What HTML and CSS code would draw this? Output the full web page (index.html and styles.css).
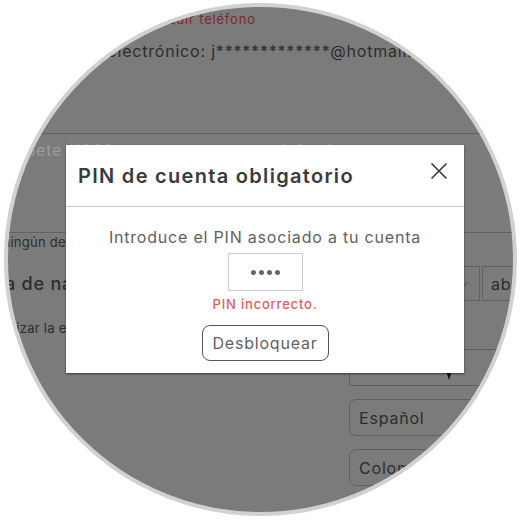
FILE: index.html
```html
<!DOCTYPE html>
<html lang="es">
<head>
<meta charset="utf-8">
<title>PIN de cuenta obligatorio</title>
<link rel="stylesheet" href="styles.css">
</head>
<body>
<div class="lens">
  <div class="page">
    <div class="add-phone">Añadir teléfono</div>
    <div class="email">Correo electrónico: j*************@hotmail.com</div>
    <div class="textarea"><span class="placeholder">Descríbete (1000 caracteres como máximo)</span></div>
    <div class="hint hint-desc">No incluyas ningún detalle personal</div>
    <div class="birth-row">
      <div class="birth-label">Fecha de nacimiento</div>
      <div class="select select-day">
        <span>12</span>
        <svg class="chev" width="10" height="6" viewBox="0 0 10 6"><path d="M1 1l4 4 4-4" fill="none" stroke="#5a5a5a" stroke-width="1.2"/></svg>
      </div>
      <div class="select select-month"><span>abr</span></div>
    </div>
    <div class="hint hint-age">Actualizar la edad requiere verificación</div>
    <div class="field field-gender">
      <svg class="caret" width="8" height="12" viewBox="0 0 8 12"><path d="M0 0h8L4 12z" fill="#141414"/></svg>
    </div>
    <div class="field field-round">Español</div>
    <div class="field field-round">Colombia</div>
  </div>

  <div class="modal">
    <div class="modal-header">
      <h2 class="modal-title">PIN de cuenta obligatorio</h2>
      <svg class="close" width="18" height="18" viewBox="0 0 18 18"><path d="M1.5 1.5l15 15M16.5 1.5l-15 15" stroke="#393b3d" stroke-width="1.6" fill="none"/></svg>
    </div>
    <div class="modal-body">
      <p class="modal-text">Introduce el PIN asociado a tu cuenta</p>
      <div class="pin-input"><i></i><i></i><i></i><i></i></div>
      <p class="pin-error">PIN incorrecto.</p>
      <button class="unlock">Desbloquear</button>
    </div>
  </div>
</div>
</body>
</html>
```
FILE: styles.css
```css
* { box-sizing: border-box; }
html, body { margin: 0; padding: 0; background: #ffffff; }
body {
  font-family: Inter, "Noto Sans", sans-serif;
  letter-spacing: 0.05em;
}
.lens {
  position: relative;
  width: 513px;
  height: 513px;
  margin: 3px 0 0 4px;
  border: 4px solid #d1d1d1;
  border-radius: 50%;
  overflow: hidden;
  background: #7a7b7a;
}
.page {
  display: flex;
  flex-direction: column;
  align-items: flex-start;
  color: #2c2d2e;
}
.add-phone {
  margin: 4px 0 0 142px;
  font-size: 13px;
  line-height: 16px;
  color: #7e2a33;
  white-space: nowrap;
}
.email {
  margin: 14px 0 0 37px;
  font-size: 16px;
  line-height: 20px;
  white-space: nowrap;
}
.textarea {
  margin: 72px 0 0 -48px;
  width: 600px;
  height: 100px;
  border-top: 1px solid #626262;
  border-bottom: 1px solid #626262;
  padding: 6px 0 0 12px;
}
.placeholder {
  font-size: 16px;
  line-height: 20px;
  color: #9b9b9b;
  white-space: nowrap;
}
.hint {
  font-size: 13px;
  line-height: 16px;
  letter-spacing: 0.02em;
  white-space: nowrap;
}
.hint-desc { margin: 1px 0 0 -84px; }
.birth-row {
  margin: 16px 0 0 -48px;
  display: flex;
  align-items: center;
}
.birth-label {
  width: 410px;
  font-size: 18px;
  font-weight: 500;
  line-height: 22px;
  white-space: nowrap;
}
.select {
  height: 35px;
  width: 110px;
  border: 1px solid #616161;
  display: flex;
  align-items: center;
  padding: 0 8px;
  font-size: 16px;
}
.select-day { justify-content: space-between; padding-right: 10px; }
.select-month { margin-left: 2px; }
.hint-age { margin: 19px 0 0 -32px; }
.field {
  height: 37px;
  width: 200px;
  margin: 13px 0 0 341px;
  border: 1px solid #616161;
  display: flex;
  align-items: center;
  padding: 0 9px;
  font-size: 16px;
}
.field-gender { align-items: flex-end; padding: 0 0 5px 95px; }
.field-round { border-radius: 7px; }

/* modal */
.modal {
  position: absolute;
  left: 58px;
  top: 138px;
  width: 398px;
  background: #ffffff;
  box-shadow: 0 1px 2px rgba(0, 0, 0, 0.55);
}
.modal-header {
  height: 62px;
  border-bottom: 1px solid #c9c9c9;
  display: flex;
  align-items: center;
  justify-content: space-between;
  padding: 0 16px 0 12px;
}
.modal-title {
  margin: 0;
  font-size: 20px;
  font-weight: 600;
  letter-spacing: 1.3px;
  line-height: 24px;
  color: #393b3d;
}
.close { margin-top: -10px; }
.modal-body {
  display: flex;
  flex-direction: column;
  align-items: center;
  padding: 20px 0 12px;
}
.modal-text {
  margin: 0;
  font-size: 16px;
  line-height: 20px;
  color: #606162;
}
.pin-input {
  margin-top: 6px;
  width: 75px;
  height: 38px;
  border: 1px solid #cccccc;
  display: flex;
  align-items: center;
  justify-content: center;
  gap: 3px;
}
.pin-input i {
  width: 5px;
  height: 5px;
  border-radius: 50%;
  background: #666666;
}
.pin-error {
  margin: 5px 0 0;
  font-size: 13px;
  font-weight: 500;
  line-height: 16px;
  color: #f0575f;
}
.unlock {
  margin-top: 13px;
  width: 127px;
  height: 36px;
  border: 1px solid #555555;
  border-radius: 8px;
  background: #ffffff;
  font-family: inherit;
  letter-spacing: 0.05em;
  font-size: 16px;
  color: #626262;
  padding: 0;
}
```
